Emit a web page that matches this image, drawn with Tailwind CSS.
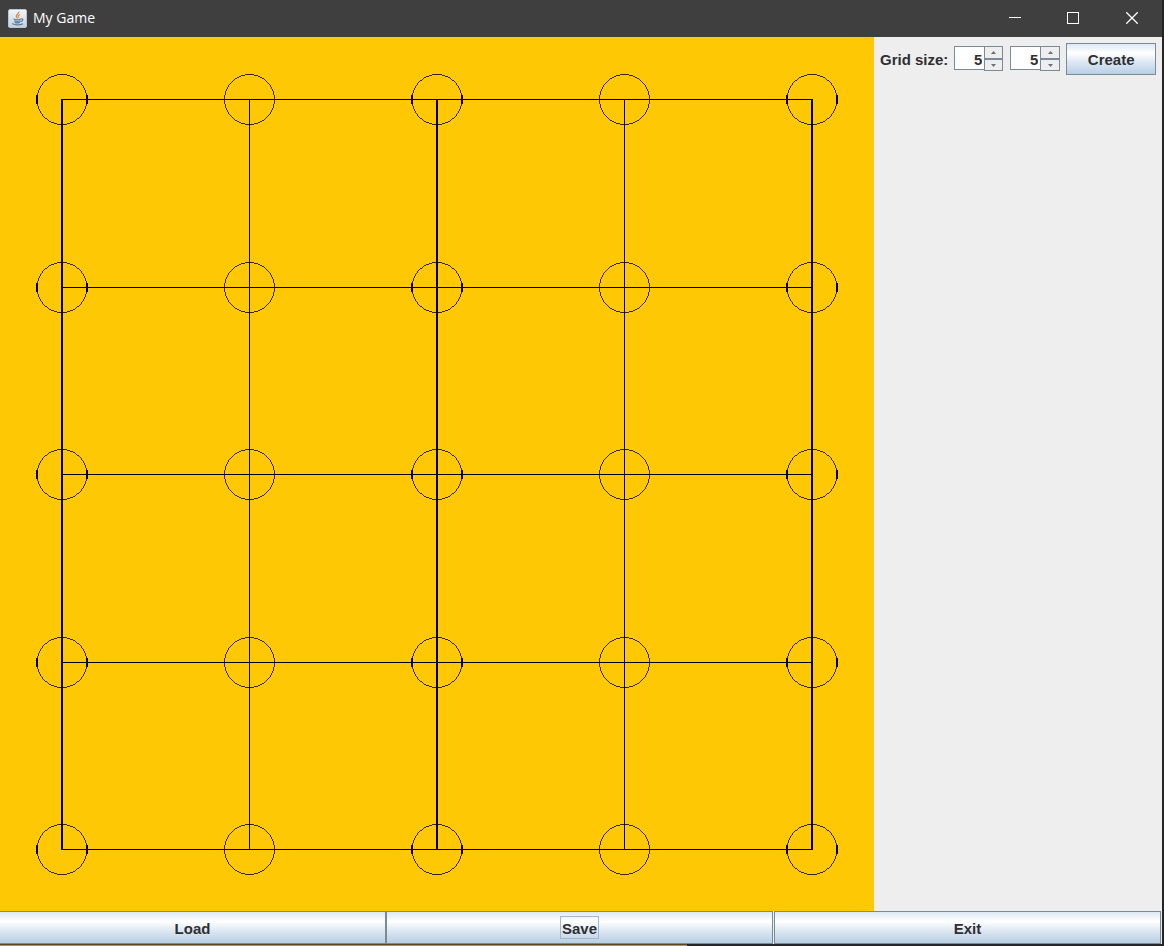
<!DOCTYPE html>
<html lang="en">
<head>
<meta charset="utf-8">
<meta name="viewport" content="width=device-width, initial-scale=1">
<title>My Game</title>
<script src="https://cdn.jsdelivr.net/npm/@tailwindcss/browser@4"></script>
</head>
<body class="flex h-screen flex-col overflow-hidden bg-[#23272b] font-['Liberation_Sans',Arial,sans-serif] text-[15px] leading-5 font-bold text-[#2f2f33]">
  <header class="flex h-[37px] shrink-0 items-center bg-[#3f3f3f] border-r-2 border-[#242424] pl-2 text-white">
    <svg class="h-5 w-5 shrink-0" viewBox="0 0 20 20" aria-hidden="true">
      <defs><linearGradient id="tile" x1="0" y1="0" x2="0" y2="1"><stop offset="0" stop-color="#f4f6f8"/><stop offset="1" stop-color="#c3d0dc"/></linearGradient></defs>
      <rect x="0.5" y="0.5" width="18" height="18" rx="1.5" fill="url(#tile)" stroke="#b7c6d3"/>
      <path d="M10.8 2.5c.8 2-3.6 3-2.4 5.2.4.8 1 1.1 1 1.8M12 5.5c-2.3 1-2.2 2-1.2 3" fill="none" stroke="#d98a4e" stroke-width="1.3"/>
      <path d="M5.5 10c2 .8 5.500.8 7.500 0M6 11.700c2 .8 5 .8 6.500 0M6.800 13.400c1.800.7 3.600.6 5 0M13 10c2.500-.8 2.500 2-.4 2.700M4 14.600c3 1.700 8 1.700 11 .1" fill="none" stroke="#5c7d99" stroke-width="1.200"/>
    </svg>
    <h1 class="ml-[5px] flex-1 pb-px font-['Open_Sans','Noto_Sans',sans-serif] text-sm font-normal">My Game</h1>
    <div class="flex h-full">
      <button type="button" aria-label="Minimize" class="flex h-full w-[58px] items-center justify-center">
        <svg class="h-3 w-3" viewBox="0 0 12 12" shape-rendering="crispEdges"><path d="M0 4.500h12" stroke="#fff"/></svg>
      </button>
      <button type="button" aria-label="Maximize" class="flex h-full w-[58px] items-center justify-center pb-px">
        <svg class="h-3 w-3" viewBox="0 0 12 12" shape-rendering="crispEdges"><rect x="0.5" y="0.5" width="11" height="11" fill="none" stroke="#fff"/></svg>
      </button>
      <button type="button" aria-label="Close" class="flex h-full w-[60px] items-center justify-center pb-px">
        <svg class="h-3 w-3" viewBox="0 0 12 12"><path d="M.3.3l11.400 11.400M11.700.3L.3 11.700" stroke="#fff" stroke-width="1.300"/></svg>
      </button>
    </div>
  </header>

  <main class="flex min-h-0 flex-1 border-r-2 border-[#242424] bg-[#eeeeee]">
    <svg id="board" class="block aspect-square h-full shrink-0 bg-[#ffc804]" viewBox="0 0 874 874" shape-rendering="crispEdges" fill="none" stroke="#000" role="img" aria-label="Game board, 5 by 5"></svg>
    <form class="flex min-w-0 flex-1 items-start gap-[6px] px-[6px] pt-[6px]">
      <label for="rows" class="mt-[7px] whitespace-nowrap">Grid size:</label>
      <div class="mt-[3px] mr-px flex">
        <input id="rows" type="text" inputmode="numeric" value="5" class="h-6 w-[30px] border-t border-b border-l border-[#7a8a99] bg-white pt-[2px] pr-[2px] text-right outline-none">
        <div class="flex w-[19px] flex-col">
          <button type="button" aria-label="More rows" class="flex h-[13px] items-center justify-center border border-[#7a8a99] bg-[#eeeeee]"><svg class="h-[3px] w-[5px]" viewBox="0 0 5 3"><path d="M2.500 0L5 3H0z" fill="#66727e"/></svg></button>
          <button type="button" aria-label="Fewer rows" class="flex h-3 items-center justify-center border border-[#7a8a99] bg-[#eeeeee]"><svg class="h-[3px] w-[5px]" viewBox="0 0 5 3"><path d="M0 0h5L2.500 3z" fill="#66727e"/></svg></button>
        </div>
      </div>
      <div class="mt-[3px] flex">
        <input id="cols" aria-label="Grid columns" type="text" inputmode="numeric" value="5" class="h-6 w-[30px] border-t border-b border-l border-[#7a8a99] bg-white pt-[2px] pr-[2px] text-right outline-none">
        <div class="flex w-5 flex-col">
          <button type="button" aria-label="More columns" class="flex h-[13px] items-center justify-center border border-[#7a8a99] bg-[#eeeeee]"><svg class="h-[3px] w-[5px]" viewBox="0 0 5 3"><path d="M2.500 0L5 3H0z" fill="#66727e"/></svg></button>
          <button type="button" aria-label="Fewer columns" class="flex h-3 items-center justify-center border border-[#7a8a99] bg-[#eeeeee]"><svg class="h-[3px] w-[5px]" viewBox="0 0 5 3"><path d="M0 0h5L2.500 3z" fill="#66727e"/></svg></button>
        </div>
      </div>
      <button type="button" class="h-8 flex-1 border border-[#7a8a99] bg-[linear-gradient(#dde8f3,#ffffff_30%,#dde8f3_60%,#b8cfe5)] pt-px">Create</button>
    </form>
  </main>

  <footer class="shrink-0">
    <div class="grid h-[33px] grid-cols-3 border-r-2 border-[#242424] bg-[#eeeeee] pr-px">
      <button type="button" class="mr-px border-y border-r border-[#7a8a99] bg-[linear-gradient(#dde8f3,#ffffff_30%,#dde8f3_60%,#b8cfe5)] pt-[2px]">Load</button>
      <button type="button" class="mr-px -ml-px flex items-center justify-center border border-[#7a8a99] bg-[linear-gradient(#dde8f3,#ffffff_30%,#dde8f3_60%,#b8cfe5)]"><span class="h-[23px] border border-[#a3b8cc] px-px pt-[2px]">Save</span></button>
      <button type="button" class="border border-[#7a8a99] bg-[linear-gradient(#dde8f3,#ffffff_30%,#dde8f3_60%,#b8cfe5)] pt-[2px]">Exit</button>
    </div>
    <div class="h-[2px] bg-[#23272b]"><div class="h-full w-[59%] border-b border-[#b79a27] bg-[#574b1c]"></div></div>
  </footer>

<script>
  const columns = [62, 249.5, 437, 624.5, 812];
  const rows = [62.5, 250.5, 437.5, 625.5, 812.5];
  let shapes = '';
  rows.forEach(y => { shapes += `<path d="M62 ${y}H812"/>`; });
  columns.forEach((x, i) => {
    const wide = i % 2 === 0;
    shapes += `<path d="M${x} 62V813" stroke-width="${wide ? 2 : 1}"/>`;
    rows.forEach(y => {
      shapes += `<circle cx="${x}" cy="${y}" r="25" stroke-width="0.8"/>`;
      if (wide) shapes += `<path d="M${x - 25} ${y - 4.500}v9M${x + 25} ${y - 4.500}v9" stroke-width="2"/>`;
    });
  });
  document.getElementById('board').innerHTML = shapes;
</script>
</body>
</html>
